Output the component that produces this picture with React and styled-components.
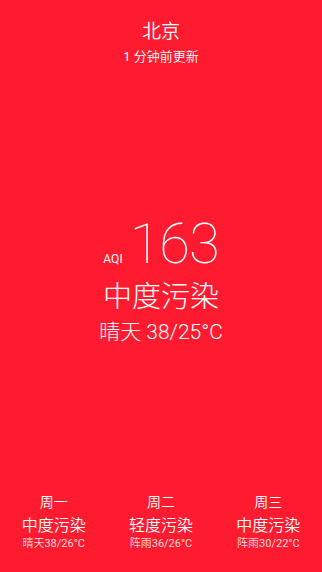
import React from 'react';
import styled, { createGlobalStyle } from 'styled-components';

const GlobalStyle = createGlobalStyle`
  html, body {
    margin: 0;
    padding: 0;
    height: 100%;
    background: #fe1b2f;
  }
  #root {
    height: 100%;
  }
`;

const lightFont = `"Roboto", "Noto Sans CJK SC Light", "Noto Sans CJK SC", sans-serif`;
const smallFont = `"Roboto", "Noto Sans CJK SC DemiLight", "Noto Sans CJK SC", sans-serif`;

const Screen = styled.div`
  height: 100vh;
  display: flex;
  flex-direction: column;
  background: #fe1b2f;
  color: #fff;
  font-family: ${smallFont};
  font-weight: 400;
  text-align: center;
`;

const Header = styled.header`
  padding-top: 21px;
  display: flex;
  flex-direction: column;
  align-items: center;
`;

const City = styled.div`
  font-size: 19px;
  line-height: 22px;
`;

const Updated = styled.div`
  margin-top: 6px;
  font-size: 13px;
  line-height: 16px;
`;

const Main = styled.main`
  flex: 1;
  display: flex;
  flex-direction: column;
  align-items: center;
  justify-content: center;
  padding-top: 2px;
  font-family: ${lightFont};
  font-weight: 300;
`;

const AqiRow = styled.div`
  display: flex;
  align-items: baseline;
  gap: 7px;
`;

const AqiLabel = styled.span`
  font-size: 12px;
  font-weight: 400;
`;

const AqiValue = styled.span`
  font-size: 56px;
  line-height: 56px;
  font-weight: 100;
  letter-spacing: -1px;
`;

const Level = styled.div`
  margin-top: 8px;
  font-size: 29px;
  line-height: 34px;
`;

const Weather = styled.div`
  margin-top: 6px;
  font-size: 21px;
  line-height: 24px;
`;

const Forecast = styled.footer`
  display: grid;
  grid-template-columns: repeat(3, 1fr);
  padding-bottom: 21px;
`;

const Day = styled.div`
  display: flex;
  flex-direction: column;
  align-items: center;
`;

const DayName = styled.div`
  font-size: 14px;
  line-height: 18px;
`;

const DayLevel = styled.div`
  margin-top: 5px;
  font-size: 16px;
  line-height: 20px;
`;

const DayWeather = styled.div`
  font-size: 11px;
  line-height: 15px;
  color: rgba(255, 255, 255, 0.85);
`;

const days = [
  { name: '周一', level: '中度污染', weather: '晴天38/26°C' },
  { name: '周二', level: '轻度污染', weather: '阵雨36/26°C' },
  { name: '周三', level: '中度污染', weather: '阵雨30/22°C' },
];

export default function App() {
  return (
    <>
      <GlobalStyle />
      <Screen>
        <Header>
          <City>北京</City>
          <Updated>1 分钟前更新</Updated>
        </Header>
        <Main>
          <AqiRow>
            <AqiLabel>AQI</AqiLabel>
            <AqiValue>163</AqiValue>
          </AqiRow>
          <Level>中度污染</Level>
          <Weather>晴天 38/25°C</Weather>
        </Main>
        <Forecast>
          {days.map((d) => (
            <Day key={d.name}>
              <DayName>{d.name}</DayName>
              <DayLevel>{d.level}</DayLevel>
              <DayWeather>{d.weather}</DayWeather>
            </Day>
          ))}
        </Forecast>
      </Screen>
    </>
  );
}
